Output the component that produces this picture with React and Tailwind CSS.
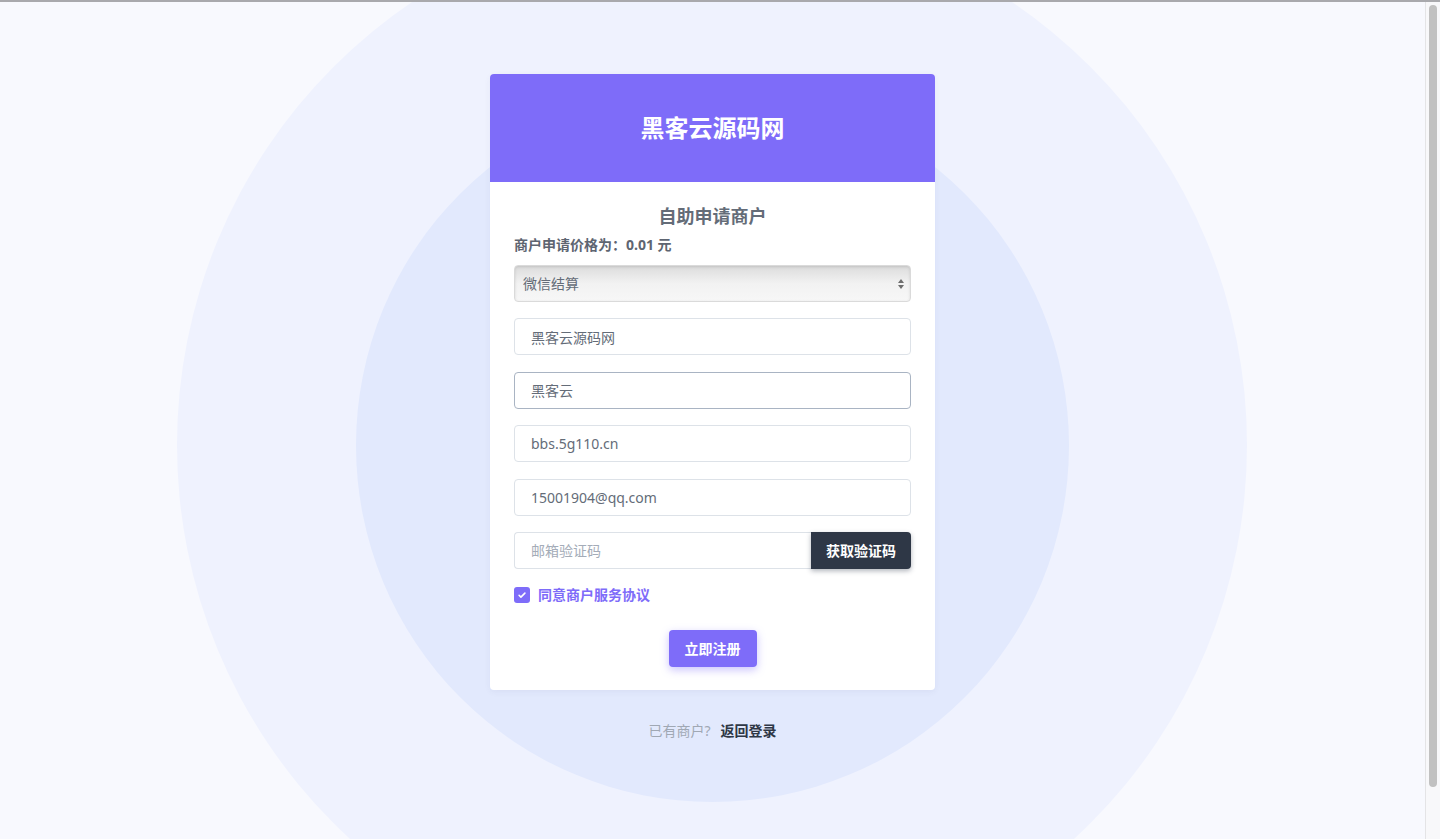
import React, { useState } from 'react';

const font = { fontFamily: '"Noto Sans", "Noto Sans CJK SC", sans-serif' };

const Field = ({ value, placeholder, focused }) => (
  <input
    defaultValue={value}
    placeholder={placeholder}
    className={`w-full h-[37px] px-4 rounded text-sm text-[#646c78] placeholder:text-[#a4acb8] bg-white border outline-none ${
      focused ? 'border-[#a9b4c3]' : 'border-[#dde2e8]'
    }`}
  />
);

const App = () => {
  const [agree, setAgree] = useState(true);

  return (
    <div className="h-[839px] flex overflow-hidden border-t-2 border-[#a9a9ad] bg-[#f8f9fe]" style={font}>
      <div className="relative flex-1 overflow-hidden">
        {/* decorative rings */}
        <div className="absolute left-[177px] top-[-92px] w-[1070px] h-[1070px] rounded-full bg-[#eff2fe]" />
        <div className="absolute left-[356px] top-[87px] w-[713px] h-[713px] rounded-full bg-[#e2e9fd]" />

        <div className="relative flex flex-col items-center pt-[72px]">
          <div className="w-[445px] bg-white rounded shadow-[0_2px_6px_rgba(60,70,120,0.06)] overflow-hidden">
            <div className="h-[108px] bg-[#7e6cf9] flex items-center justify-center">
              <h1 className="text-[24px] font-bold text-white">黑客云源码网</h1>
            </div>

            <div className="px-6 pt-[20px] pb-[23px]">
              <h2 className="text-center text-[18px] font-bold text-[#646c78] leading-7">自助申请商户</h2>
              <p className="mt-[5px] text-sm font-bold text-[#5e6571] leading-5">商户申请价格为：0.01 元</p>

              <div className="relative mt-[10px] h-[37px] rounded border border-[#dadada] bg-gradient-to-b from-[#dcdcdc] via-[#f2f2f2] to-[#f7f7f7] shadow-[inset_0_1px_3px_rgba(0,0,0,0.12)]">
                <select className="w-full h-full appearance-none bg-transparent pl-2 pr-8 text-sm text-[#646c78] outline-none">
                  <option>微信结算</option>
                  <option>支付宝结算</option>
                </select>
                <div className="pointer-events-none absolute right-[6px] top-1/2 -translate-y-1/2 flex flex-col gap-[2px]">
                  <span className="block w-0 h-0 border-x-[3px] border-x-transparent border-b-[4px] border-b-[#6d6d6d]" />
                  <span className="block w-0 h-0 border-x-[3px] border-x-transparent border-t-[4px] border-t-[#6d6d6d]" />
                </div>
              </div>

              <div className="mt-[16px] flex flex-col gap-[16.5px]">
                <Field value="黑客云源码网" />
                <Field value="黑客云" focused />
                <Field value="bbs.5g110.cn" />
                <Field value="15001904@qq.com" />
                <div className="flex">
                  <input
                    placeholder="邮箱验证码"
                    className="flex-1 min-w-0 h-[37px] px-4 rounded-l text-sm text-[#646c78] placeholder:text-[#a4acb8] border border-r-0 border-[#dde2e8] outline-none"
                  />
                  <button className="w-[100px] h-[37px] rounded-r bg-[#2e3746] text-white text-sm font-bold shadow-[0_2px_5px_rgba(30,40,60,0.35)]">
                    获取验证码
                  </button>
                </div>
              </div>

              <label className="mt-[16px] flex items-center gap-2 cursor-pointer" onClick={() => setAgree(!agree)}>
                <span className={`w-4 h-4 rounded-[3px] flex items-center justify-center ${agree ? 'bg-[#7e6cf9]' : 'bg-white border border-[#cbd2dc]'}`}>
                  {agree && (
                    <svg viewBox="0 0 12 12" className="w-[10px] h-[10px]">
                      <path d="M2.5 6.3l2.2 2.2 4.8-4.8" fill="none" stroke="white" strokeWidth="1.9" strokeLinecap="round" strokeLinejoin="round" />
                    </svg>
                  )}
                </span>
                <span className="text-sm font-bold text-[#7e6cf9]">同意商户服务协议</span>
              </label>

              <div className="mt-[25px] flex justify-center">
                <button className="h-[37px] px-4 rounded bg-[#7e6cf9] text-white text-sm font-bold shadow-[0_3px_8px_rgba(126,108,249,0.4)]">
                  立即注册
                </button>
              </div>
            </div>
          </div>

          <div className="mt-[31px] flex items-center gap-[10px] text-sm">
            <span className="text-[#a0a8b4]">已有商户?</span>
            <a href="#" className="font-bold text-[#2e3746]">返回登录</a>
          </div>
        </div>
      </div>

      {/* page scrollbar */}
      <div className="w-[15px] shrink-0 bg-[#f8f8fa] border-l border-[#e4e4e6] px-[3px] pt-[3px]">
        <div className="h-[782px] rounded-full bg-[#c1c1c1]" />
      </div>
    </div>
  );
};

export default App;
